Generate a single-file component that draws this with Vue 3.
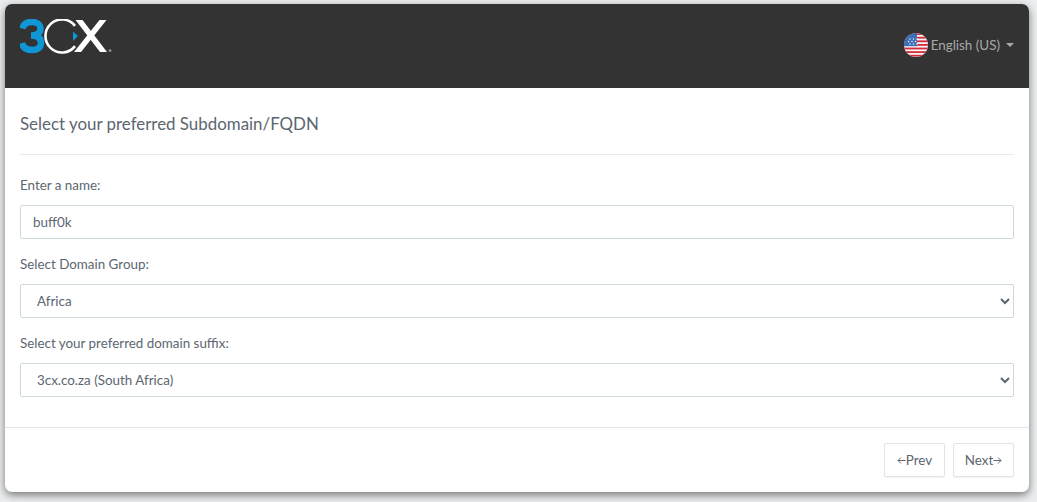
<script setup>
import { ref } from 'vue';

const name = ref('buff0k');
const group = ref('Africa');
const suffix = ref('3cx.co.za (South Africa)');
const stripes = [0, 1, 2, 3, 4, 5, 6];
const stars = [
  [6, 6], [9.5, 6], [13, 6],
  [4.5, 8.5], [8, 8.5], [11.5, 8.5],
  [6, 11], [9.5, 11], [13, 11],
];
</script>

<template>
  <div class="page">
    <div class="card">
      <header class="top">
        <svg class="logo" width="92" height="36" viewBox="0 0 92 36">
          <path d="M2.5 9.5 C3.5 4.5 8 3 12 3 C17 3 20.5 5.5 20.5 9.5 C20.5 13.5 17 16.5 11 16.5 C18 16.5 21 19.5 21 24 C21 29 17 31 12 31 C7 31 3 29 2 24" fill="none" stroke="#0f96d6" stroke-width="6.5" />
          <path d="M55 6.9 A16.5 16.5 0 1 0 55 27.1" fill="none" stroke="#fff" stroke-width="2.6" />
          <path d="M53 12.5 L58 17 L53 22 Z" fill="#0f96d6" />
          <path d="M55.5 1 H62.5 L87 33 H80 Z" fill="#fff" />
          <path d="M86.5 1 H79.5 L54 33 H61 Z" fill="#fff" />
          <circle cx="90" cy="31.5" r="1.5" fill="#8a8a8a" />
        </svg>
        <a class="lang">
          <svg class="flag" width="24" height="24" viewBox="0 0 24 24">
            <defs>
              <clipPath id="round"><circle cx="12" cy="12" r="12" /></clipPath>
            </defs>
            <g clip-path="url(#round)">
              <rect width="24" height="24" fill="#f4f4f4" />
              <rect v-for="s in stripes" :key="s" x="0" :y="s * 3.6 + 0.2" width="24" height="1.8" fill="#d8283c" />
              <rect width="13" height="13.2" fill="#3b6fb5" />
              <circle v-for="(st, i) in stars" :key="i" :cx="st[0]" :cy="st[1]" r="0.7" fill="#fff" />
            </g>
          </svg>
          <span>English (US)</span>
          <i class="caret"></i>
        </a>
      </header>

      <main class="body">
        <h1>Select your preferred Subdomain/FQDN</h1>
        <hr />
        <label for="nm">Enter a name:</label>
        <input id="nm" v-model="name" type="text" />
        <label for="grp">Select Domain Group:</label>
        <select id="grp" v-model="group">
          <option>Africa</option>
        </select>
        <label for="suf">Select your preferred domain suffix:</label>
        <select id="suf" v-model="suffix">
          <option>3cx.co.za (South Africa)</option>
        </select>
      </main>

      <footer class="foot">
        <button type="button">
          <svg width="9" height="9" viewBox="0 0 9 9"><path d="M8.5 4.5 H1 M4 1.5 L1 4.5 L4 7.5" /></svg>Prev
        </button>
        <button type="button">
          Next<svg width="9" height="9" viewBox="0 0 9 9"><path d="M0.5 4.5 H8 M5 1.5 L8 4.5 L5 7.5" /></svg>
        </button>
      </footer>
    </div>
  </div>
</template>

<style>
body {
  background: #eceeef;
}
</style>

<style scoped>
.page {
  padding: 4px 8px 10px 5px;
  font-family: Lato, "Noto Sans", sans-serif;
  font-size: 13.4px;
  color: #5c6670;
}

.card {
  background: #fff;
  border-radius: 7px;
  overflow: hidden;
  box-shadow: 0 3px 8px rgba(0, 0, 0, 0.5);
}

.top {
  height: 84px;
  box-sizing: border-box;
  background: #333;
  padding: 15px 15px 0;
  display: flex;
  justify-content: space-between;
  align-items: flex-start;
}

.lang {
  display: flex;
  align-items: center;
  color: #a9a9a9;
  margin-top: 14px;
}

.flag {
  margin-right: 3px;
}

.caret {
  display: block;
  width: 0;
  height: 0;
  margin-left: 6px;
  border-top: 4px solid #a9a9a9;
  border-left: 4px solid transparent;
  border-right: 4px solid transparent;
}

.body {
  padding: 25px 15px 30px;
  display: flex;
  flex-direction: column;
}

h1 {
  margin: 0;
  font-size: 16.9px;
  font-weight: 400;
  line-height: 22px;
}

hr {
  width: 100%;
  margin: 19px 0 21px;
  border: 0;
  border-top: 1px solid #e8eaeb;
}

label {
  line-height: 18px;
  margin-bottom: 11px;
}

input,
select {
  height: 34px;
  box-sizing: border-box;
  border: 1px solid #ced9db;
  border-radius: 2px;
  background: #fff;
  padding: 0 12px;
  font: inherit;
  color: #5c6670;
  margin-bottom: 16px;
  outline: none;
}

select:last-child {
  margin-bottom: 0;
}

.foot {
  border-top: 1px solid #e3e6e8;
  padding: 15px;
  display: flex;
  justify-content: flex-end;
  gap: 8px;
}

button {
  display: flex;
  align-items: center;
  justify-content: center;
  width: 61px;
  height: 34px;
  background: #fff;
  border: 1px solid #dfe5e8;
  border-radius: 2px;
  box-shadow: 0 1px 1px rgba(0, 0, 0, 0.05);
  font: inherit;
  color: #5c6670;
  padding: 0;
}

button svg {
  fill: none;
  stroke: #5c6670;
  stroke-width: 1;
}
</style>
